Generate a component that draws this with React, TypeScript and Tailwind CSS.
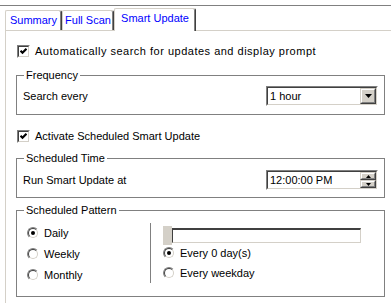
import type { ReactNode } from "react";

function Checkbox({ checked }: { checked?: boolean }) {
  return (
    <span className="flex h-[13px] w-[13px] shrink-0 border border-t-[#808080] border-l-[#808080] border-b-white border-r-white">
      <span className="flex flex-1 items-center justify-center border border-t-[#404040] border-l-[#404040] border-b-[#d4d0c8] border-r-[#d4d0c8] bg-white">
        {checked && (
          <svg width="7" height="7" viewBox="0 0 7 7">
            <polyline points="0.5,2.8 2.5,4.8 6.5,0.8" fill="none" stroke="#000" strokeWidth="2.2" />
          </svg>
        )}
      </span>
    </span>
  );
}

function Radio({ checked }: { checked?: boolean }) {
  return (
    <span className="flex h-[12px] w-[12px] shrink-0 rounded-full border border-t-[#808080] border-l-[#808080] border-b-white border-r-white">
      <span className="flex flex-1 items-center justify-center rounded-full border border-t-[#404040] border-l-[#404040] border-b-[#d4d0c8] border-r-[#d4d0c8] bg-white">
        {checked && <span className="h-[4px] w-[4px] rounded-full bg-black" />}
      </span>
    </span>
  );
}

function Group({ title, className, children }: { title: string; className?: string; children: ReactNode }) {
  return (
    <fieldset className={`ml-[10px] w-[369px] border border-[#808080] ${className ?? ""}`}>
      <legend className="ml-[7px] px-[2px] leading-[13px]">{title}</legend>
      {children}
    </fieldset>
  );
}

function Sunken({ className, children }: { className?: string; children: ReactNode }) {
  return (
    <div className={`flex border border-t-[#808080] border-l-[#808080] border-b-white border-r-white ${className ?? ""}`}>
      <div className="flex flex-1 items-center border border-t-[#404040] border-l-[#404040] border-b-[#d4d0c8] border-r-[#d4d0c8] bg-white">
        {children}
      </div>
    </div>
  );
}

function Raised({ className, children }: { className?: string; children: ReactNode }) {
  return (
    <div className={`flex border border-t-[#d4d0c8] border-l-[#d4d0c8] border-b-[#404040] border-r-[#404040] ${className ?? ""}`}>
      <div className="flex flex-1 items-center justify-center border border-t-white border-l-white border-b-[#808080] border-r-[#808080] bg-[#d4d0c8]">
        {children}
      </div>
    </div>
  );
}

function Tab({ label, width, selected }: { label: string; width: string; selected?: boolean }) {
  return (
    <div
      className={`flex items-center justify-center rounded-t-[2px] border-l border-t border-[#d4d0c8] border-r border-r-[#404040] bg-white text-[#0000ff] shadow-[inset_-1px_0_0_#808080] ${width} ${
        selected ? "-mb-px h-[23px] pb-[3px]" : "h-[20px]"
      }`}
    >
      {label}
    </div>
  );
}

export default function App() {
  return (
    <div className="h-[303px] w-[391px] overflow-hidden bg-white font-['Liberation_Sans',Arial,sans-serif] text-[11px] leading-[13px] text-black">
      <div className="h-[5px]" />
      <div className="h-px bg-[#808080]" />

      <div className="relative z-10 flex h-[24px] items-end pl-[5px]">
        <Tab label="Summary" width="w-[57px]" />
        <Tab label="Full Scan" width="w-[52px]" />
        <Tab label="Smart Update" width="w-[82px]" selected />
      </div>

      <div className="ml-[5px] h-[300px] border-l border-t border-[#d4d0c8]">
        <label className="mt-[14px] flex items-center gap-[5px] pl-[11px]">
          <Checkbox checked />
          <span className="tracking-[0.5px]">Automatically search for updates and display prompt</span>
        </label>

        <Group title="Frequency" className="mt-[11px] pb-[8px]">
          <div className="mt-[4px] flex h-[20px] items-center justify-between pl-[6px] pr-[6px]">
            <span>Search every</span>
            <Sunken className="h-[20px] w-[112px]">
              <span className="flex-1 pl-[2px]">1 hour</span>
              <Raised className="h-[16px] w-[16px]">
                <svg width="7" height="4" viewBox="0 0 7 4">
                  <path d="M0 0h7L3.5 4z" fill="#000" />
                </svg>
              </Raised>
            </Sunken>
          </div>
        </Group>

        <label className="mt-[15px] flex items-center gap-[5px] pl-[11px]">
          <Checkbox checked />
          <span>Activate Scheduled Smart Update</span>
        </label>

        <Group title="Scheduled Time" className="mt-[9px] pb-[7px]">
          <div className="mt-[5px] flex h-[20px] items-center justify-between pl-[6px] pr-[6px]">
            <span>Run Smart Update at</span>
            <Sunken className="h-[20px] w-[112px]">
              <span className="flex-1 pl-[2px]">12:00:00 PM</span>
              <div className="flex h-[16px] w-[16px] flex-col">
                <Raised className="h-[8px] w-[16px]">
                  <svg width="5" height="3" viewBox="0 0 5 3">
                    <path d="M0 3h5L2.5 0z" fill="#000" />
                  </svg>
                </Raised>
                <Raised className="h-[8px] w-[16px]">
                  <svg width="5" height="3" viewBox="0 0 5 3">
                    <path d="M0 0h5L2.5 3z" fill="#000" />
                  </svg>
                </Raised>
              </div>
            </Sunken>
          </div>
        </Group>

        <Group title="Scheduled Pattern" className="mt-[6px] pb-[11px]">
          <div className="flex">
            <div className="mt-[6px] flex w-[133px] flex-col gap-[1px] pl-[10px]">
              {[
                ["Daily", true],
                ["Weekly", false],
                ["Monthly", false],
              ].map(([label, on]) => (
                <label key={label as string} className="flex h-[20px] items-center gap-[5px]">
                  <Radio checked={on as boolean} />
                  <span>{label as string}</span>
                </label>
              ))}
            </div>
            <div className="mt-[6px] h-[60px] w-[2px] border-l border-r border-l-[#808080] border-r-white" />
            <div className="mt-[11px] flex flex-col pl-[11px]">
              <div className="flex h-[15px] w-[198px] items-center">
                <div className="h-[19px] w-[9px] shrink-0 bg-[#d4d0c8]" />
                <div className="h-[15px] flex-1 border-l border-t-2 border-b border-r border-l-[#404040] border-t-[#404040] border-b-[#d4d0c8] border-r-[#d4d0c8] bg-white" />
              </div>
              <label className="flex h-[20px] items-center gap-[5px]">
                <Radio checked />
                <span>Every 0 day(s)</span>
              </label>
              <label className="flex h-[20px] items-center gap-[5px]">
                <Radio />
                <span>Every weekday</span>
              </label>
            </div>
          </div>
        </Group>
      </div>
    </div>
  );
}
